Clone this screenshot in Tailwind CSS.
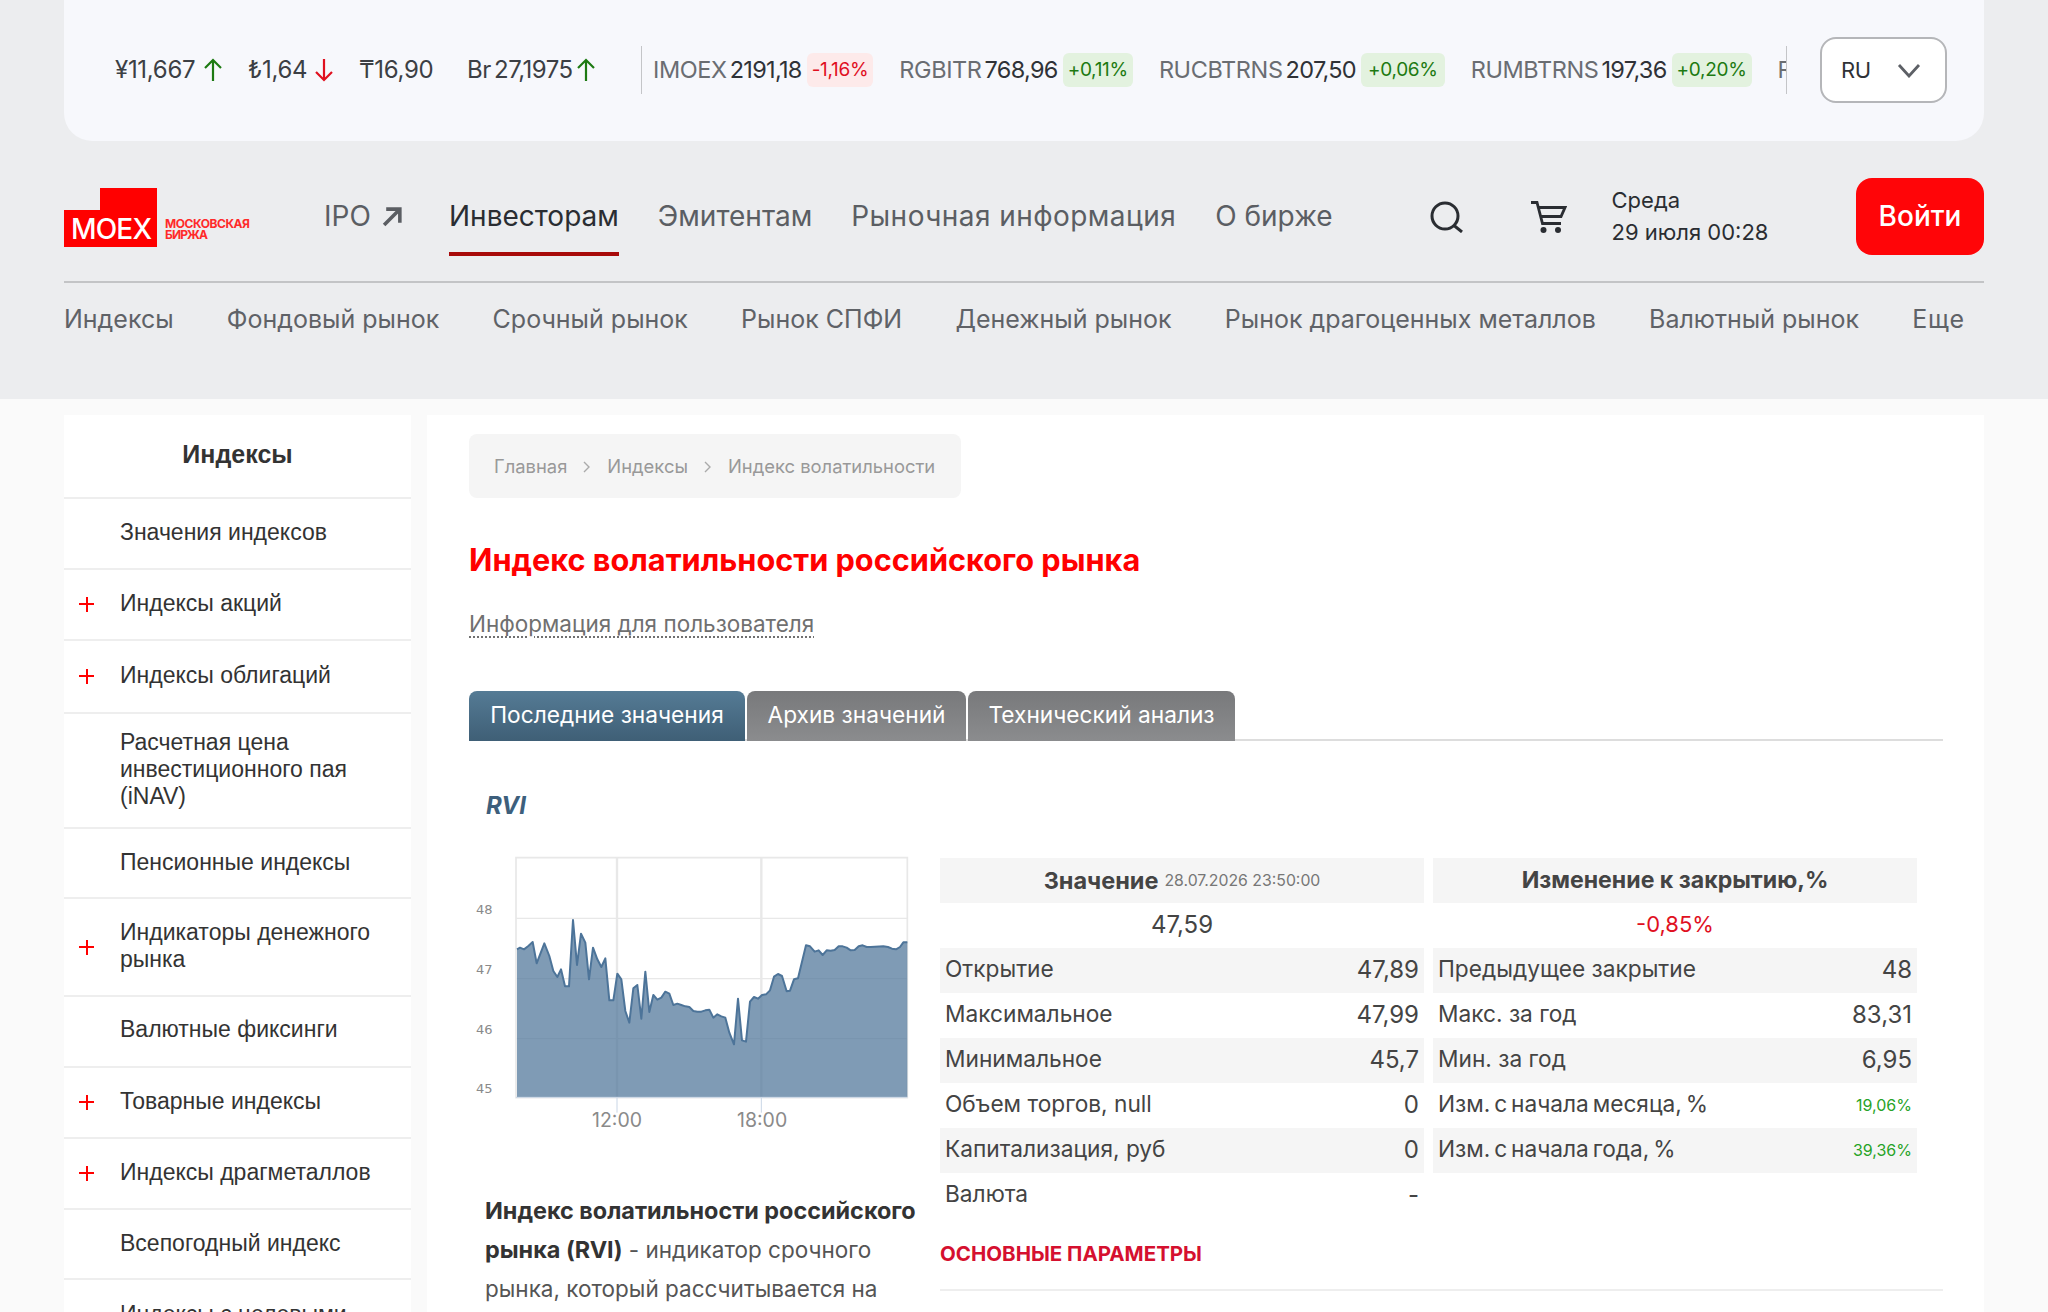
<!DOCTYPE html>
<html lang="ru">
<head>
    <meta charset="UTF-8">
    <meta name="viewport" content="width=device-width, initial-scale=1.0">
    <title>Индекс волатильности российского рынка</title>
    <script src="https://cdn.jsdelivr.net/npm/@tailwindcss/browser@4"></script>
</head>
<body class="bg-[#fafafa] font-['Inter',sans-serif] text-[#333] antialiased">
<div class="h-[1312px] w-[2048px] overflow-hidden">

    <!-- header -->
    <header class="h-[399px] bg-[#ecedef] px-16">
        <div class="flex h-[141px] items-center rounded-b-[28px] bg-[#f7f8fc] pb-[1px] pl-[51px] pr-[37px] tracking-[-0.3px]">
            <div class="flex shrink-0 items-center gap-[26px] text-[24px] text-[#3c3f44]">
                <span class="flex w-[107px] shrink-0 items-center gap-2 whitespace-nowrap">¥11,667
                    <svg class="h-6 w-5 shrink-0" viewBox="0 0 20 24" fill="none" stroke="#1d7a12" stroke-width="2.2"><path d="M10 23V2M2 10l8-8 8 8"/></svg>
                </span>
                <span class="flex w-[85px] shrink-0 items-center gap-[7px] whitespace-nowrap">₺1,64
                    <svg class="h-6 w-5 shrink-0" viewBox="0 0 20 24" fill="none" stroke="#e0101f" stroke-width="2.2"><path d="M10 1v21M2 14l8 8 8-8"/></svg>
                </span>
                <span class="w-[82px] shrink-0">₸16,90</span>
                <span class="flex w-[130px] shrink-0 items-center gap-[3px] tracking-[-0.5px] whitespace-nowrap [word-spacing:-3px]">Br 27,1975
                    <svg class="h-6 w-5 shrink-0" viewBox="0 0 20 24" fill="none" stroke="#1d7a12" stroke-width="2.2"><path d="M10 23V2M2 10l8-8 8 8"/></svg>
                </span>
            </div>
            <div class="ml-[44px] flex h-12 w-[1146px] shrink-0 items-center gap-[26px] overflow-hidden border-x border-[#c4c5c8] pl-[11px] text-[23.5px] whitespace-nowrap">
                <span class="flex items-center gap-[3px] tracking-[-0.4px] text-[#6a6d72]">IMOEX <b class="font-normal tracking-[-0.7px] text-[#2f3237]">2191,18</b>
                    <i class="ml-[2px] rounded-md bg-[#fdeaea] px-[5px] py-[3px] text-[19px] tracking-[-0.3px] not-italic text-[#e0101f]">-1,16%</i></span>
                <span class="flex items-center gap-[3px] tracking-[-0.4px] text-[#6a6d72]">RGBITR <b class="font-normal tracking-[-0.7px] text-[#2f3237]">768,96</b>
                    <i class="ml-[2px] rounded-md bg-[#e3f2df] px-[5px] py-[3px] text-[19px] tracking-[-0.3px] not-italic text-[#1d7a12]">+0,11%</i></span>
                <span class="flex items-center gap-[3px] tracking-[-0.4px] text-[#6a6d72]">RUCBTRNS <b class="font-normal tracking-[-0.7px] text-[#2f3237]">207,50</b>
                    <i class="ml-[2px] rounded-md bg-[#e3f2df] px-[7px] py-[3px] text-[19px] tracking-[-0.3px] not-italic text-[#1d7a12]">+0,06%</i></span>
                <span class="flex items-center gap-[3px] tracking-[-0.4px] text-[#6a6d72]">RUMBTRNS <b class="font-normal tracking-[-0.7px] text-[#2f3237]">197,36</b>
                    <i class="ml-[2px] rounded-md bg-[#e3f2df] px-[5px] py-[3px] text-[19px] tracking-[-0.3px] not-italic text-[#1d7a12]">+0,20%</i></span>
                <span class="text-[#6a6d72]">RGBI</span>
            </div>
            <div class="ml-auto flex h-[66px] w-[127px] items-center justify-between rounded-2xl border-2 border-[#b5b6b9] bg-white pl-[19px] pr-[24px] text-[22px] text-[#2f3237]">
                RU
                <svg class="h-4 w-6" viewBox="0 0 24 16" fill="none" stroke="#5d6066" stroke-width="2.8"><path d="M2 3l10 11L22 3"/></svg>
            </div>
        </div>

        <div class="flex h-[142px] items-center border-b-2 border-[#c3c4c6] pt-[10px]">
            <svg class="mt-[4px] h-[60px] w-[190px] shrink-0" viewBox="0 0 190 60">
                <path d="M36 0h57v59H0V22h36z" fill="#ff0000"/>
                <text x="7" y="50.5" fill="#fff" font-size="28" font-weight="500" font-family="Inter" textLength="81">MOEX</text>
                <text x="101" y="39.5" fill="#ff2a2a" font-size="12" font-weight="700" font-family="Inter" textLength="85">МОСКОВСКАЯ</text>
                <text x="101" y="50.5" fill="#ff2a2a" font-size="12" font-weight="700" font-family="Inter" textLength="43">БИРЖА</text>
            </svg>
            <nav class="ml-[70px] flex h-full items-center gap-[39px] text-[28px] text-[#5b5e63]">
                <a class="mr-[7px] flex w-[79px] items-center justify-between" href="#">IPO
                    <svg class="h-[21px] w-[21px]" viewBox="0 0 20 20" fill="none" stroke="#5b5e63" stroke-width="3.4"><path d="M2 18 16 4M4 3h13v13"/></svg>
                </a>
                <a class="relative text-[#2a2d32]" href="#">Инвесторам<span class="absolute -bottom-[19px] left-0 h-1 w-full bg-[#a80a0a]"></span></a>
                <a href="#">Эмитентам</a>
                <a class="tracking-[0.45px]" href="#">Рыночная информация</a>
                <a href="#">О бирже</a>
            </nav>
            <svg class="ml-[97px] h-[34px] w-[34px]" viewBox="0 0 34 34" fill="none" stroke="#2a2d32" stroke-width="3"><circle cx="15" cy="17" r="13"/><path d="M24 26.5l8 6.5"/></svg>
            <svg class="ml-[67px] h-[36px] w-[36px]" viewBox="0 0 36 36" fill="none" stroke="#2a2d32" stroke-width="2.8"><path d="M0 4.5h6l5.5 21H30"/><path d="M7 9.5h27l-4 9H10"/><circle cx="12.5" cy="32" r="3" fill="#2a2d32" stroke="none"/><circle cx="27" cy="32" r="3" fill="#2a2d32" stroke="none"/></svg>
            <div class="ml-[45px] text-[22px] leading-8 text-[#2a2d32]">Среда<br>29 июля 00:28</div>
            <button class="ml-auto h-[77px] w-[128px] rounded-2xl bg-[#ff0508] text-[28px] font-medium text-white">Войти</button>
        </div>

        <nav class="flex h-[74px] items-center justify-between pr-[19px] text-[25px] text-[#5f6267]">
            <a href="#">Индексы</a>
            <a href="#">Фондовый рынок</a>
            <a href="#">Срочный рынок</a>
            <a href="#">Рынок СПФИ</a>
            <a href="#">Денежный рынок</a>
            <a href="#">Рынок драгоценных металлов</a>
            <a href="#">Валютный рынок</a>
            <a class="tracking-[0.8px]" href="#">Еще</a>
        </nav>
    </header>

    <div class="flex gap-4 px-16 pt-4">
        <!-- sidebar -->
        <aside class="w-[347px] shrink-0 bg-white font-['Liberation_Sans',sans-serif] text-[23px] leading-[27px] text-[#333]">
            <h2 class="flex h-[84px] items-center justify-center border-b-2 border-[#eeeeee] pb-1 text-[25px] font-bold">Индексы</h2>
            <a class="block border-b-2 border-[#eeeeee] pt-[20px] pb-[22px] pl-14" href="#">Значения индексов</a>
            <a class="relative block border-b-2 border-[#eeeeee] pt-[20px] pb-[22px] pl-14" href="#"><span class="absolute left-[15px] top-[33px] h-[2px] w-[15px] bg-[#ff0000]"></span><span class="absolute left-[21.5px] top-[26.5px] h-[15px] w-[2px] bg-[#ff0000]"></span>Индексы акций</a>
            <a class="relative block border-b-2 border-[#eeeeee] pt-[21px] pb-[23px] pl-14" href="#"><span class="absolute left-[15px] top-[34px] h-[2px] w-[15px] bg-[#ff0000]"></span><span class="absolute left-[21.5px] top-[27.5px] h-[15px] w-[2px] bg-[#ff0000]"></span>Индексы облигаций</a>
            <a class="block border-b-2 border-[#eeeeee] pt-[15px] pb-[17px] pl-14 pr-6" href="#">Расчетная цена инвестиционного пая (iNAV)</a>
            <a class="block border-b-2 border-[#eeeeee] pt-[20px] pb-[21px] pl-14" href="#">Пенсионные индексы</a>
            <a class="relative block border-b-2 border-[#eeeeee] pt-[20px] pb-[22px] pl-14 pr-4" href="#"><span class="absolute left-[15px] top-[47px] h-[2px] w-[15px] bg-[#ff0000]"></span><span class="absolute left-[21.5px] top-[40.5px] h-[15px] w-[2px] bg-[#ff0000]"></span>Индикаторы денежного рынка</a>
            <a class="block border-b-2 border-[#eeeeee] pt-[19px] pb-[23px] pl-14" href="#">Валютные фиксинги</a>
            <a class="relative block border-b-2 border-[#eeeeee] pt-[20px] pb-[22px] pl-14" href="#"><span class="absolute left-[15px] top-[33px] h-[2px] w-[15px] bg-[#ff0000]"></span><span class="absolute left-[21.5px] top-[26.5px] h-[15px] w-[2px] bg-[#ff0000]"></span>Товарные индексы</a>
            <a class="relative block border-b-2 border-[#eeeeee] pt-[20px] pb-[22px] pl-14" href="#"><span class="absolute left-[15px] top-[33px] h-[2px] w-[15px] bg-[#ff0000]"></span><span class="absolute left-[21.5px] top-[26.5px] h-[15px] w-[2px] bg-[#ff0000]"></span>Индексы драгметаллов</a>
            <a class="block border-b-2 border-[#eeeeee] pt-[20px] pb-[21px] pl-14" href="#">Всепогодный индекс</a>
            <a class="block py-[21px] pl-14" href="#">Индексы с целевыми</a>
        </aside>

        <!-- content -->
        <main class="min-w-0 flex-1 bg-white pl-[42px] pr-[41px] pt-[19px]">
            <div class="inline-flex h-16 items-center gap-4 rounded-lg bg-[#f5f5f5] pl-[25px] pr-[26px] pt-[1px] text-[18.4px] text-[#999]">
                <span>Главная</span>
                <svg class="h-3 w-2" viewBox="0 0 8 12" fill="none" stroke="#aaa" stroke-width="1.4"><path d="M1 1l5 5-5 5"/></svg>
                <span>Индексы</span>
                <svg class="h-3 w-2" viewBox="0 0 8 12" fill="none" stroke="#aaa" stroke-width="1.4"><path d="M1 1l5 5-5 5"/></svg>
                <span>Индекс волатильности</span>
            </div>
            <h1 class="mt-[42px] text-[30.7px] leading-10 font-bold text-[#ff0000]">Индекс волатильности российского рынка</h1>
            <div class="mt-[26px] text-[22.5px] leading-9"><a class="text-[#707070] underline decoration-dotted decoration-2 underline-offset-4" href="#">Информация для пользователя</a></div>

            <div class="mt-[49px] flex h-[50px] gap-[2px] border-b-2 border-[#dddddd] text-[22.7px] text-white">
                <a class="flex h-[50px] w-[276px] items-center justify-center rounded-t-lg bg-linear-to-b from-[#557b95] to-[#3f5f76] pb-[1px]" href="#">Последние значения</a>
                <a class="flex h-[50px] w-[219px] items-center justify-center rounded-t-lg bg-linear-to-b from-[#78797b] to-[#8b8c8e] pb-[1px]" href="#">Архив значений</a>
                <a class="flex h-[50px] w-[267px] items-center justify-center rounded-t-lg bg-linear-to-b from-[#78797b] to-[#8b8c8e] pb-[1px]" href="#">Технический анализ</a>
            </div>

            <div class="mt-[49px] pl-[17px] text-[24px] leading-8 font-bold text-[#3d5f7c] italic">RVI</div>

            <div class="mt-[36px] flex">
                <div class="w-[471px] shrink-0">
                    <svg class="-mt-[17px] block h-[280px] w-[471px]" viewBox="0 0 1413 840" font-family="DejaVu Sans">
                        <g stroke="#e8e8e8" fill="none">
                            <path stroke-width="5" d="M141 50H1315V770H141Z"/>
                            <path stroke-width="4" d="M141 232H1315M141 413H1315M141 593H1315"/>
                            <path stroke-width="7" d="M444 50V770M877 50V770"/>
                        </g>
                        <path fill="#4d7499" fill-opacity=".72" d="M144 325 153 320 165 325 178 315 191 303 203 367 226 307 241 345 253 390 265 408 276 385 288 436 300 436 312 237 324 372 336 278 349 305 360 415 372 320 385 355 397 378 409 352 421 478 433 478 445 398 457 415 469 510 481 545 493 442 505 432 517 533 529 392 541 513 553 462 565 476 577 470 589 452 601 458 613 492 625 488 637 492 649 496 661 498 673 510 685 512 697 512 709 508 721 506 733 530 745 520 757 526 769 530 781 575 795 610 807 473 819 598 831 602 843 482 855 468 867 473 879 462 891 460 903 448 915 407 927 399 939 405 953 451 963 449 975 415 987 412 1011 313 1023 316 1037 332 1049 328 1061 342 1073 328 1085 329 1097 327 1109 316 1121 316 1133 320 1145 328 1157 327 1169 316 1181 313 1193 318 1205 318 1243 316 1257 318 1269 323 1281 325 1293 318 1303 304 1315 304V768H144Z"/>
                        <path fill="none" stroke="#4d7499" stroke-width="6" stroke-linejoin="round" d="M144 325 153 320 165 325 178 315 191 303 203 367 226 307 241 345 253 390 265 408 276 385 288 436 300 436 312 237 324 372 336 278 349 305 360 415 372 320 385 355 397 378 409 352 421 478 433 478 445 398 457 415 469 510 481 545 493 442 505 432 517 533 529 392 541 513 553 462 565 476 577 470 589 452 601 458 613 492 625 488 637 492 649 496 661 498 673 510 685 512 697 512 709 508 721 506 733 530 745 520 757 526 769 530 781 575 795 610 807 473 819 598 831 602 843 482 855 468 867 473 879 462 891 460 903 448 915 407 927 399 939 405 953 451 963 449 975 415 987 412 1011 313 1023 316 1037 332 1049 328 1061 342 1073 328 1085 329 1097 327 1109 316 1121 316 1133 320 1145 328 1157 327 1169 316 1181 313 1193 318 1205 318 1243 316 1257 318 1269 323 1281 325 1293 318 1303 304 1315 304"/>
                        <path stroke="#c9d6e6" stroke-width="3" d="M141 769H1315M444 770V815M877 770V815"/>
                        <g fill="#8a8a8a" font-size="39">
                            <text x="21" y="219">48</text><text x="21" y="400">47</text><text x="21" y="579">46</text><text x="21" y="757">45</text>
                        </g>
                    </svg>
                    <div class="-mt-[15px] flex h-[46px] pl-[123px] text-[19.5px] leading-7 text-[#8a8a8a]">
                        <span class="w-[145px]">12:00</span><span>18:00</span>
                    </div>
                    <p class="mt-[39px] pl-[16px] text-[22.5px] leading-[39px] text-[#555]"><b class="text-[23.4px] font-bold text-[#333]">Индекс волатильности российского рынка (RVI)</b> - индикатор срочного рынка, который рассчитывается на</p>
                </div>

                <div class="min-w-0 flex-1">
                    <div class="grid w-[977px] grid-cols-2 gap-x-[9px] text-[24px] text-[#444] [&>div]:flex [&>div]:h-[45px] [&>div]:items-center [&>div]:justify-between [&>div]:px-[5px] [&>div]:pb-[2px]">
                        <div class="justify-center! gap-1.5 bg-[#f5f5f5] pb-0! font-bold"><span class="text-[23.5px]">Значение</span><span class="text-[15.8px] font-normal text-[#777]">28.07.2026 23:50:00</span></div>
                        <div class="justify-center! bg-[#f5f5f5] pb-0! text-[23.1px] font-bold">Изменение к закрытию,%</div>
                        <div class="justify-center!">47,59</div>
                        <div class="justify-center! text-[22px] text-[#e0101f]">-0,85%</div>
                        <div class="bg-[#f5f5f5]"><span class="text-[22.7px]">Открытие</span><span>47,89</span></div>
                        <div class="bg-[#f5f5f5]"><span class="text-[22.7px]">Предыдущее закрытие</span><span>48</span></div>
                        <div><span class="text-[22.7px]">Максимальное</span><span>47,99</span></div>
                        <div><span class="text-[22.7px]">Макс. за год</span><span>83,31</span></div>
                        <div class="bg-[#f5f5f5]"><span class="text-[22.7px]">Минимальное</span><span>45,7</span></div>
                        <div class="bg-[#f5f5f5]"><span class="text-[22.7px]">Мин. за год</span><span>6,95</span></div>
                        <div><span class="text-[22.7px]">Объем торгов, null</span><span>0</span></div>
                        <div><span class="text-[22.7px] [word-spacing:-2.5px]">Изм. с начала месяца, %</span><span class="text-[16px] text-[#27a327]">19,06%</span></div>
                        <div class="bg-[#f5f5f5]"><span class="text-[22.7px]">Капитализация, руб</span><span>0</span></div>
                        <div class="bg-[#f5f5f5]"><span class="text-[22.7px] [word-spacing:-2.5px]">Изм. с начала года, %</span><span class="text-[16px] text-[#27a327]">39,36%</span></div>
                        <div><span class="text-[22.7px]">Валюта</span><span>-</span></div>
                    </div>
                    <div class="mt-[22px] text-[20.5px] leading-7 font-bold text-[#d5102f]">ОСНОВНЫЕ ПАРАМЕТРЫ</div>
                    <div class="mt-[21px] h-[2px] bg-[#eeeeee]"></div>
                </div>
            </div>
        </main>
    </div>
</div>
</body>
</html>
